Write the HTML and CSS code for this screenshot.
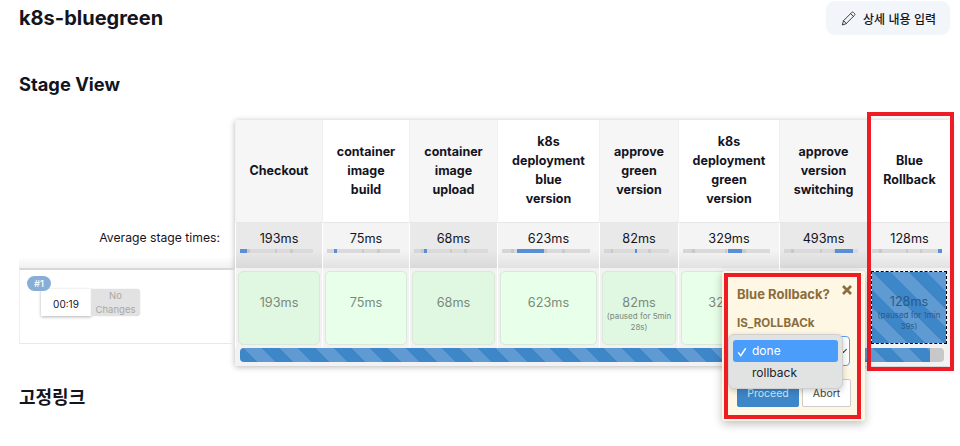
FILE: index.html
```html
<!DOCTYPE html>
<html lang="ko">
<head>
<meta charset="utf-8">
<title>k8s-bluegreen</title>
<link rel="stylesheet" href="styles.css">
</head>
<body>
<main class="page">
  <header class="top">
    <h1 class="title">k8s-bluegreen</h1>
    <button class="edit-btn">
      <svg class="pencil" viewBox="0 0 16 16" width="15" height="15" fill="none" stroke="#333" stroke-width="1" stroke-linejoin="round" stroke-linecap="round"><path d="M1.5 14.5l1.2-4.2L11.4 1.6a1.3 1.3 0 0 1 1.9 0l1.1 1.1a1.3 1.3 0 0 1 0 1.9L5.7 13.3z"/><path d="M2.7 10.3l3 3M10.3 2.8l2.9 2.9"/></svg>
      <span>상세 내용 입력</span>
    </button>
  </header>

  <h2 class="section stage-title">Stage View</h2>

  <section class="stage">
    <div class="left">
      <div class="left-head"></div>
      <div class="avg-label">Average stage times:</div>
      <div class="build">
        <span class="badge">#1</span>
        <div class="build-time">00:19</div>
        <div class="changes">No<br>Changes</div>
      </div>
    </div>

    <div class="view">
      <div class="col-head odd">Checkout</div>
      <div class="col-head">container image build</div>
      <div class="col-head odd">container image upload</div>
      <div class="col-head">k8s<br>deployment<br>blue<br>version</div>
      <div class="col-head odd">approve green version</div>
      <div class="col-head">k8s<br>deployment<br>green<br>version</div>
      <div class="col-head odd">approve version switching</div>
      <div class="col-head">Blue Rollback</div>

      <div class="avg odd">193ms<div class="mini"><i style="left:0;width:10%"></i></div></div>
      <div class="avg">75ms<div class="mini"><i style="left:10%;width:4%"></i></div></div>
      <div class="avg odd">68ms<div class="mini"><i style="left:14%;width:3%"></i></div></div>
      <div class="avg">623ms<div class="mini"><i style="left:17%;width:31%"></i></div></div>
      <div class="avg odd">82ms<div class="mini"><i style="left:48%;width:3%"></i></div></div>
      <div class="avg">329ms<div class="mini"><i style="left:52%;width:16%"></i></div></div>
      <div class="avg odd">493ms<div class="mini"><i style="left:69%;width:24%"></i></div></div>
      <div class="avg">128ms<div class="mini"><i style="left:94%;width:6%"></i></div></div>

      <div class="cell-wrap"><div class="cell odd">193ms</div></div>
      <div class="cell-wrap"><div class="cell">75ms</div></div>
      <div class="cell-wrap"><div class="cell odd">68ms</div></div>
      <div class="cell-wrap"><div class="cell">623ms</div></div>
      <div class="cell-wrap"><div class="cell odd">82ms<small>(paused for 5min 28s)</small></div></div>
      <div class="cell-wrap"><div class="cell">329ms</div></div>
      <div class="cell-wrap"><div class="cell odd">493ms</div></div>
      <div class="cell-wrap last"><div class="cell paused">128ms<small>(paused for 1min 39s)</small></div></div>

      <div class="progress"><div class="progress-fill"></div></div>
    </div>

    <div class="marker marker-col"></div>

    <div class="popover">
      <div class="pop-head">
        <span class="pop-title">Blue Rollback?</span>
        <svg class="pop-close" viewBox="0 0 10 10" width="10" height="10" stroke="#8a6d3b" stroke-width="2.6"><path d="M1 1l8 8M9 1l-8 8"/></svg>
      </div>
      <div class="pop-label">IS_ROLLBACk</div>
      <div class="pop-select"><span class="chev"></span></div>
      <div class="pop-actions">
        <button class="btn-proceed">Proceed</button>
        <button class="btn-abort">Abort</button>
      </div>
      <ul class="menu">
        <li class="menu-item selected">
          <svg class="check" viewBox="0 0 12 12" width="10" height="10" fill="none" stroke="#fff" stroke-width="1.7"><path d="M1.5 6.5l3 4 6-9"/></svg>done
        </li>
        <li class="menu-item">rollback</li>
      </ul>
      <div class="marker marker-pop"></div>
    </div>
  </section>

  <h2 class="section link-title">고정링크</h2>
</main>
</body>
</html>
```
FILE: styles.css
```css
* { box-sizing: border-box; }
html, body { margin: 0; height: 446px; overflow: hidden; background: #fff; }
body {
  font-family: Inter, "Noto Sans CJK KR", "Liberation Sans", sans-serif;
  color: #14141f;
}
.page { padding: 0 10px 0 19px; }

.top { display: flex; justify-content: space-between; align-items: flex-start; height: 35px; padding-top: 1px; }
.title { margin: 5px 0 0; font-size: 20px; line-height: 24px; font-weight: 700; }
.edit-btn {
  display: flex; align-items: center; gap: 7px;
  width: 124px; height: 34px; padding: 0 0 0 15px;
  border: 0; border-radius: 9px; background: #f2f5f9;
  font: 500 12px "Noto Sans CJK KR", sans-serif; color: #14141f;
}
.pencil { flex: none; }

.section { margin: 0; font-size: 18.3px; line-height: 22px; font-weight: 700; }
.stage-title { margin-top: 38px; }
.link-title { margin-top: 19px; font-family: "Noto Sans CJK KR", sans-serif; font-size: 18px; }

.stage { position: relative; display: flex; margin-top: 25px; height: 246px; }

.left { width: 216px; flex: none; }
.left-head { height: 102px; }
.avg-label {
  height: 46px; padding: 8px 15px 0 0; text-align: right; font-size: 12.2px; line-height: 15px;
  background: linear-gradient(#fff 75%, #f1f1f1);
}
.build {
  position: relative; display: flex; align-items: flex-start;
  height: 76px; padding: 19px 0 0 21px;
  border-top: 2px solid #d8d8d8; border-bottom: 1px solid #e8e8e8; border-left: 1px solid #eee;
}
.badge {
  position: absolute; left: 7px; top: 6px;
  width: 24px; height: 15px; border-radius: 8px; background: #88aed8;
  color: #fff; font-size: 9.5px; line-height: 15px; text-align: center; font-weight: 500;
}
.build-time {
  width: 50px; height: 27px; background: #fff; box-shadow: 0 1px 3px rgba(0,0,0,.3);
  font-size: 10px; line-height: 30px; text-align: center;
}
.changes {
  width: 49px; height: 27px; background: #e2e2e2; color: #a8a8a8; border-radius: 0 4px 4px 0;
  font-size: 9.5px; line-height: 14px; text-align: center; overflow: hidden;
  box-shadow: 0 0 1px rgba(0,0,0,.3);
}

.view {
  display: grid; flex: none; width: 716px;
  grid-template-columns: 87px 87px 88px 102px 79px 101px 88px 84px;
  grid-template-rows: 102px 46px 80px 18px;
  box-shadow: 0 1px 6px rgba(0,0,0,.28);
}
.col-head {
  display: flex; align-items: center; justify-content: center; text-align: center;
  padding: 0 12px 2px; background: #fff; font-size: 12.5px; line-height: 19px; font-weight: 700;
  border-left: 1px solid #f1f1f1;
}
.col-head.odd { background: #f6f6f6; }
.avg {
  text-align: center; font-size: 12.7px; line-height: 15px; padding-top: 8px;
  background: linear-gradient(#f4f4f4 60%, #e2e2e2); border-left: 1px solid #fff;
  border-top: 1px solid #e6e6e6;
}
.avg.odd { background: linear-gradient(#e9e9e9 60%, #d9d9d9); }
.mini {
  position: relative; height: 4px; margin: 3px 9px 0 4px; background:
    linear-gradient(90deg, #d6d6d6 0 10%, #c8c8c8 10% 14%, #dadada 14% 48%, #cbcbcb 48% 51%, #dadada 51% 68%, #cbcbcb 68% 72%, #dadada 72% 100%);
}
.mini i { position: absolute; top: 0; height: 100%; background: #5a8fd8; }
.cell-wrap { padding: 3px 2px; background: #f2f2f2; border-left: 1px solid #fff; }
.cell-wrap.last { padding: 3px 4px 4px 3px; }
.cell {
  display: flex; flex-direction: column; align-items: center;
  height: 100%; padding-top: 23px;
  border: 1px solid #d9e8d9; border-radius: 5px; background: #e8ffe9;
  color: #7a8a7a; font-size: 12.7px; line-height: 16px; text-align: center;
}
.cell.odd { background: #e0f7e2; }
.cell small { display: block; font-size: 8px; line-height: 11px; }
.cell.paused {
  padding-top: 22px;
  border: 1px dashed #000; border-radius: 0; color: #2b5a88;
  background: repeating-linear-gradient(45deg, #3d86c8 0 12.7px, #5f9bd2 12.7px 25.4px) padding-box;
}
.progress { grid-column: 1 / -1; padding: 0 7px 4px 5px; background: #f2f2f2; }
.progress-fill {
  height: 14px; border-radius: 4px;
  background:
    linear-gradient(#c8c8c8, #c8c8c8) right / 2% 100% no-repeat,
    repeating-linear-gradient(45deg, #3d86c8 0 12.7px, #5f9bd2 12.7px 25.4px);
}

.marker { position: absolute; border: 4px solid #ee1c25; pointer-events: none; }
.marker-col { left: 848px; top: -8px; width: 87px; height: 259px; }

.popover {
  position: absolute; left: 703px; top: 151px; width: 143px; height: 150px;
  padding: 13px 14px 0 15px; background: #fdf7e3; border-radius: 3px;
  box-shadow: 0 3px 10px rgba(0,0,0,.25);
}
.pop-head { display: flex; justify-content: space-between; align-items: flex-start; }
.pop-title { font-size: 13px; line-height: 20px; font-weight: 700; color: #8a6d3b; }
.pop-close { flex: none; margin: 1px -1px 0 0; }
.pop-label { margin-top: 12px; font-size: 11.6px; line-height: 14px; font-weight: 700; color: #8a6d3b; }
.pop-select {
  position: relative; margin-top: 6px; height: 30px; width: 117px; margin-left: -4px;
  border: 1px solid #5aa0e8; border-radius: 4px; background: #fff;
}
.chev {
  position: absolute; right: 3px; top: 10px; width: 5px; height: 5px;
  border-right: 1.5px solid #333; border-bottom: 1.5px solid #333; transform: rotate(45deg);
}
.pop-actions { display: flex; gap: 3px; margin-top: 13px; }
.pop-actions button { height: 28px; padding: 0; font: 10.5px Inter, sans-serif; border-radius: 2px; }
.btn-proceed { width: 62px; background: #3d86c8; color: #d6e6f5; border: 1px solid #3d86c8; }
.btn-abort { width: 49px; background: #fff; color: #444; border: 1px solid #ccc; }

.menu {
  position: absolute; left: 6px; top: 63px; width: 115px; height: 55px;
  margin: 0; padding: 5px 4px; list-style: none;
  background: #e1e3e3; border: 1px solid #cfcfcf; border-radius: 6px;
  box-shadow: 0 2px 6px rgba(0,0,0,.2);
}
.menu-item {
  position: relative; height: 22px; padding-left: 19px;
  font-size: 12px; line-height: 22px; color: #222; border-radius: 3px;
}
.menu-item.selected { background: #4a9dfb; color: #fff; }
.check { position: absolute; left: 4px; top: 7px; }

.marker-pop { left: 2px; top: 2px; width: 137px; height: 146px; }
```
